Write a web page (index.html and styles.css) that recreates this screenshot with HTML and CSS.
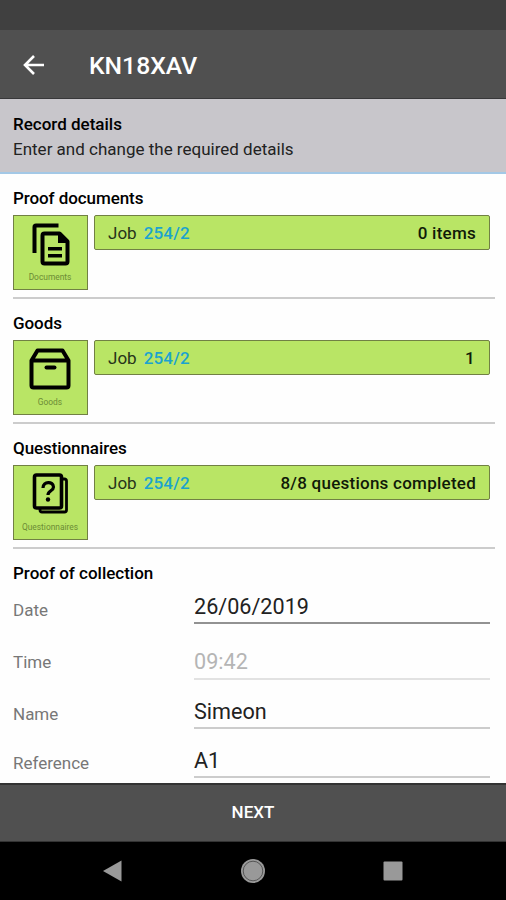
FILE: index.html
```html
<!DOCTYPE html>
<html lang="en">
<head>
<meta charset="utf-8">
<title>KN18XAV</title>
<link rel="stylesheet" href="styles.css">
</head>
<body>
<div class="status"></div>
<header class="appbar">
  <svg class="back" viewBox="0 0 22 20"><path d="M21 10H2M11 1L2 10l9 9"/></svg>
  <h1>KN18XAV</h1>
</header>
<div class="intro"><h2>Record details</h2><p>Enter and change the required details</p></div>
<main>
  <section class="group">
    <h2>Proof documents</h2>
    <div class="row">
      <div class="tile">
        <svg viewBox="0 0 44 44"><path d="M6.500 31V5q0-1.500 1.500-1.500h22.500" fill="none" stroke="#000" stroke-width="4"/><path d="M16.500 11.500h15l8 8v20q0 2-2 2h-21q-2 0-2-2v-26q0-2 2-2z" fill="none" stroke="#000" stroke-width="4" stroke-linejoin="round"/><path d="M30 11l10 10H30zM20 25h14v3.500H20zM20 32h14v3.500H20z"/></svg>
        <span>Documents</span>
      </div>
      <div class="job"><span>Job</span><b class="num">254/2</b><b class="result">0 items</b></div>
    </div>
  </section>
  <section class="group">
    <h2>Goods</h2>
    <div class="row">
      <div class="tile">
        <svg viewBox="0 0 44 44"><g fill="none" stroke="#000" stroke-width="4" stroke-linejoin="round"><path d="M3.500 13.500L9.500 3.500h25l6 10v25q0 2-2 2h-33q-2 0-2-2zM3.500 13.500h37"/><path d="M18.500 20.500h8" stroke-linecap="round"/></g></svg>
        <span>Goods</span>
      </div>
      <div class="job"><span>Job</span><b class="num">254/2</b><b class="result one">1</b></div>
    </div>
  </section>
  <section class="group">
    <h2>Questionnaires</h2>
    <div class="row">
      <div class="tile">
        <svg viewBox="0 0 44 44"><path d="M12 36v2q0 2 2 2h22.500q2 0 2-2V9q0-2-2-2H34" fill="none" stroke="#000" stroke-width="2.800"/><rect x="6.500" y="3" width="27" height="33" rx="2" fill="none" stroke="#000" stroke-width="3.600"/><path d="M15 16c0-7 10.500-7 10.500-1 0 4-5.500 3.500-5.500 8" fill="none" stroke="#000" stroke-width="3.200"/><circle cx="20" cy="27.500" r="2.200"/></svg>
        <span>Questionnaires</span>
      </div>
      <div class="job"><span>Job</span><b class="num">254/2</b><b class="result">8/8 questions completed</b></div>
    </div>
  </section>
  <section class="form">
    <h2>Proof of collection</h2>
    <div class="field date"><label>Date</label><div class="value">26/06/2019</div></div>
    <div class="field time"><label>Time</label><div class="value">09:42</div></div>
    <div class="field name"><label>Name</label><div class="value">Simeon</div></div>
    <div class="field ref"><label>Reference</label><div class="value">A1</div></div>
  </section>
</main>
<button class="next">NEXT</button>
<nav class="nav">
  <svg viewBox="0 0 20 22"><path d="M0 11L18.500 .5v21z"/></svg>
  <svg viewBox="0 0 24 24"><circle cx="12" cy="12" r="12"/><circle cx="12" cy="12" r="9.800" fill="none" stroke="#444" stroke-width=".8"/></svg>
  <svg viewBox="0 0 20 20"><rect x=".5" y=".5" width="19" height="19" rx="1"/></svg>
</nav>
</body>
</html>
```
FILE: styles.css
```css
* { box-sizing: border-box; }
body {
  margin: 0;
  width: 506px;
  height: 900px;
  overflow: hidden;
  display: flex;
  flex-direction: column;
  background: #fefefe;
  color: #111;
  font: 17px/20px Roboto, "Liberation Sans", sans-serif;
}
h1, h2, p { margin: 0; }
h2 { font-size: 17px; font-weight: 500; line-height: 20px; color: #000; }
b { font-weight: 500; }
.status { height: 30px; background: #404040; flex: none; }
.appbar {
  height: 69px;
  flex: none;
  display: flex;
  align-items: center;
  padding: 1px 0 0 23px;
  background: #505050;
  border-bottom: 1px solid #38383a;
}
.back { width: 22px; height: 20px; fill: none; stroke: #fff; stroke-width: 2.6; }
h1 { margin-left: 44px; padding-top: 3px; font-size: 24.7px; line-height: 28px; font-weight: 500; color: #fff; }
.intro {
  height: 75px;
  flex: none;
  padding: 15px 13px 0;
  background: #c8c6cb;
  border-bottom: 2px solid #a3c8e6;
}
.intro p { margin-top: 5px; color: #222; }
main { height: 609px; flex: none; overflow: hidden; padding-left: 13px; }
.group { width: 482px; height: 125px; padding-top: 14px; border-bottom: 2px solid #ccc; }
.group h2 { letter-spacing: -.08px; }
.row { display: flex; gap: 6px; margin-top: 7px; }
.tile {
  width: 75px;
  height: 75px;
  display: flex;
  flex-direction: column;
  align-items: center;
  padding: 6px 1px 0 0;
  background: #b9e565;
  border: 1px solid #718044;
}
.tile svg { width: 44px; height: 44px; }
.tile span { margin-top: 6px; font-size: 8.4px; line-height: 10px; color: #6c8c35; }
.job {
  width: 396px;
  height: 35px;
  display: flex;
  align-items: center;
  padding: 0 13px;
  background: #b9e565;
  border: 1px solid #718044;
  border-radius: 2px;
  color: #26331a;
}
.num { margin-left: 7px; letter-spacing: .2px; color: #1ba3cf; }
.result { margin-left: auto; letter-spacing: .25px; color: #101a08; }
.one { padding-right: 1px; }
.form { padding-top: 14px; }
.field { display: flex; height: 49px; }
.field label { width: 181px; color: #777; }
.value { width: 296px; font-size: 21.6px; line-height: 26px; color: #222; border-bottom: 2px solid #ccc; }
.date { height: 41px; }
.date label { padding-top: 17px; }
.date .value { padding-top: 11px; border-color: #929292; }
.time { height: 56px; }
.time label { padding-top: 28px; }
.time .value { padding-top: 25px; color: #b5b5b5; border-color: #e2e2e2; }
.name label { padding-top: 24px; }
.name .value { padding-top: 19px; }
.ref label { padding-top: 24px; }
.ref .value { padding-top: 19px; }
.next {
  height: 59px;
  flex: none;
  padding: 0 0 2px;
  border: 0;
  border-top: 2px solid #333;
  border-bottom: 1px solid #333;
  background: #505050;
  color: #fff;
  font: 500 17px/20px Roboto, "Liberation Sans", sans-serif;
}
.nav {
  height: 58px;
  flex: none;
  display: flex;
  justify-content: space-between;
  align-items: center;
  padding: 0 103px;
  background: #000;
}
.nav svg { width: 20px; height: 22px; fill: #999; }
.nav svg:nth-child(2) { width: 24px; height: 24px; }
.nav svg:nth-child(3) { height: 20px; }
```
